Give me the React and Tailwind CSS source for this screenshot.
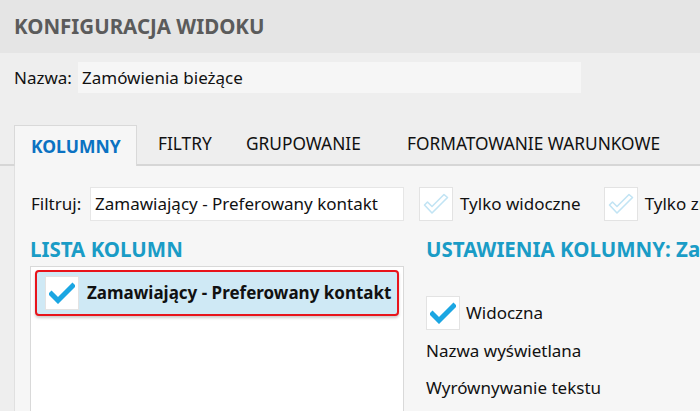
import React from "react";

const font = { fontFamily: '"Noto Sans", "Open Sans", sans-serif' };

function CheckBox({ checked }) {
  return (
    <div className="w-[34px] h-[34px] bg-white border border-[#e3e3e3] flex items-center justify-center shrink-0">
      {checked ? (
        <svg width="26" height="22" viewBox="0 0 26 22">
          <path d="M2.5 12 L9 18.5 L23.5 4" fill="none" stroke="#1ba6e2" strokeWidth="5" strokeLinecap="square" />
        </svg>
      ) : (
        <svg width="26" height="22" viewBox="0 0 26 22">
          <path
            d="M1.5 12 L4.5 9 L9 13.5 L21 1.5 L24.5 4.5 L9 20 Z"
            fill="#fff"
            stroke="#c2e4f4"
            strokeWidth="1.6"
            strokeLinejoin="round"
          />
        </svg>
      )}
    </div>
  );
}

export default function App() {
  const tabs = [
    { label: "FILTRY", w: "w-[90px]", pl: "pl-[21px]" },
    { label: "GRUPOWANIE", w: "w-[159px]", pl: "pl-[19px]" },
    { label: "FORMATOWANIE WARUNKOWE", w: "w-[300px]", pl: "pl-[21px]" },
  ];

  return (
    <div className="w-[700px] h-[411px] overflow-hidden bg-[#eeeeee] text-[#111]" style={font}>
      {/* naglowek */}
      <div className="h-[53px] bg-[#e5e5e5] flex items-center pl-[14px]">
        <h1 className="text-[20.5px] font-bold text-[#5b5b5b]">KONFIGURACJA WIDOKU</h1>
      </div>

      {/* nazwa */}
      <div className="flex items-center pl-[14px] mt-[9px] h-[31px]">
        <span className="text-[17px] w-[64px] shrink-0">Nazwa:</span>
        <div className="h-[31px] w-[503px] shrink-0 bg-[#f6f6f6] flex items-center pl-[4px] text-[17px]">
          Zamówienia bieżące
        </div>
      </div>

      {/* zakladki */}
      <div className="mt-[33px] pl-[14px] flex items-end h-[40px] border-b-2 border-[#d6d6d6] w-[720px]">
        <div className="w-[123px] shrink-0 h-[41px] -mb-[2px] bg-[#f6f6f6] border border-b-0 border-[#d9d9d9] flex items-center pl-[16px] text-[17.5px] font-bold text-[#0b72c2]">
          KOLUMNY
        </div>
        {tabs.map((t) => (
          <div key={t.label} className={`${t.w} ${t.pl} shrink-0 h-[40px] flex items-center text-[17.3px] whitespace-nowrap`}>
            {t.label}
          </div>
        ))}
      </div>

      {/* panel */}
      <div className="ml-[14px] bg-[#f6f6f6] border-l border-[#e0e0e0] h-[245px] pl-[16px] pt-[21px] overflow-hidden">
        <div className="flex items-center h-[34px] text-[17px]">
          <span className="w-[59px] shrink-0">Filtruj:</span>
          <div className="w-[314px] shrink-0 h-[34px] bg-white border border-[#e6e6e6] flex items-center pl-[4px] whitespace-nowrap">
            Zamawiający - Preferowany kontakt
          </div>
          <div className="ml-[15px] flex items-center shrink-0">
            <CheckBox />
            <span className="ml-[7px] whitespace-nowrap">Tylko widoczne</span>
          </div>
          <div className="ml-[23px] flex items-center shrink-0">
            <CheckBox />
            <span className="ml-[7px] whitespace-nowrap">Tylko zmienione</span>
          </div>
        </div>

        <div className="flex mt-[11px]">
          <div className="w-[374px] shrink-0 -ml-[1px]">
            <h2 className="text-[20.5px] font-bold text-[#1a9cc6] h-[34px] flex items-center">LISTA KOLUMN</h2>
            <div className="h-[160px] bg-white border border-[#d9d9d9] pt-[3px] px-[4px]">
              <div className="h-[46px] rounded-[4px] border-2 border-[#e8141b] bg-[#cfe9f5] shadow-[0_2px_3px_rgba(0,0,0,0.2)] flex items-center pl-[8px]">
                <CheckBox checked />
                <span className="ml-[8px] text-[17px] font-bold whitespace-nowrap">Zamawiający - Preferowany kontakt</span>
              </div>
            </div>
          </div>

          <div className="ml-[22px] flex flex-col shrink-0">
            <h2 className="text-[20.5px] font-bold text-[#1a9cc6] h-[34px] flex items-center whitespace-nowrap">
              USTAWIENIA KOLUMNY: Zamawiający
            </h2>
            <div className="mt-[30px] flex items-center text-[17px]">
              <CheckBox checked />
              <span className="ml-[6px]">Widoczna</span>
            </div>
            <div className="mt-[8px] text-[17px]">Nazwa wyświetlana</div>
            <div className="mt-[11px] text-[17px]">Wyrównywanie tekstu</div>
          </div>
        </div>
      </div>
    </div>
  );
}
